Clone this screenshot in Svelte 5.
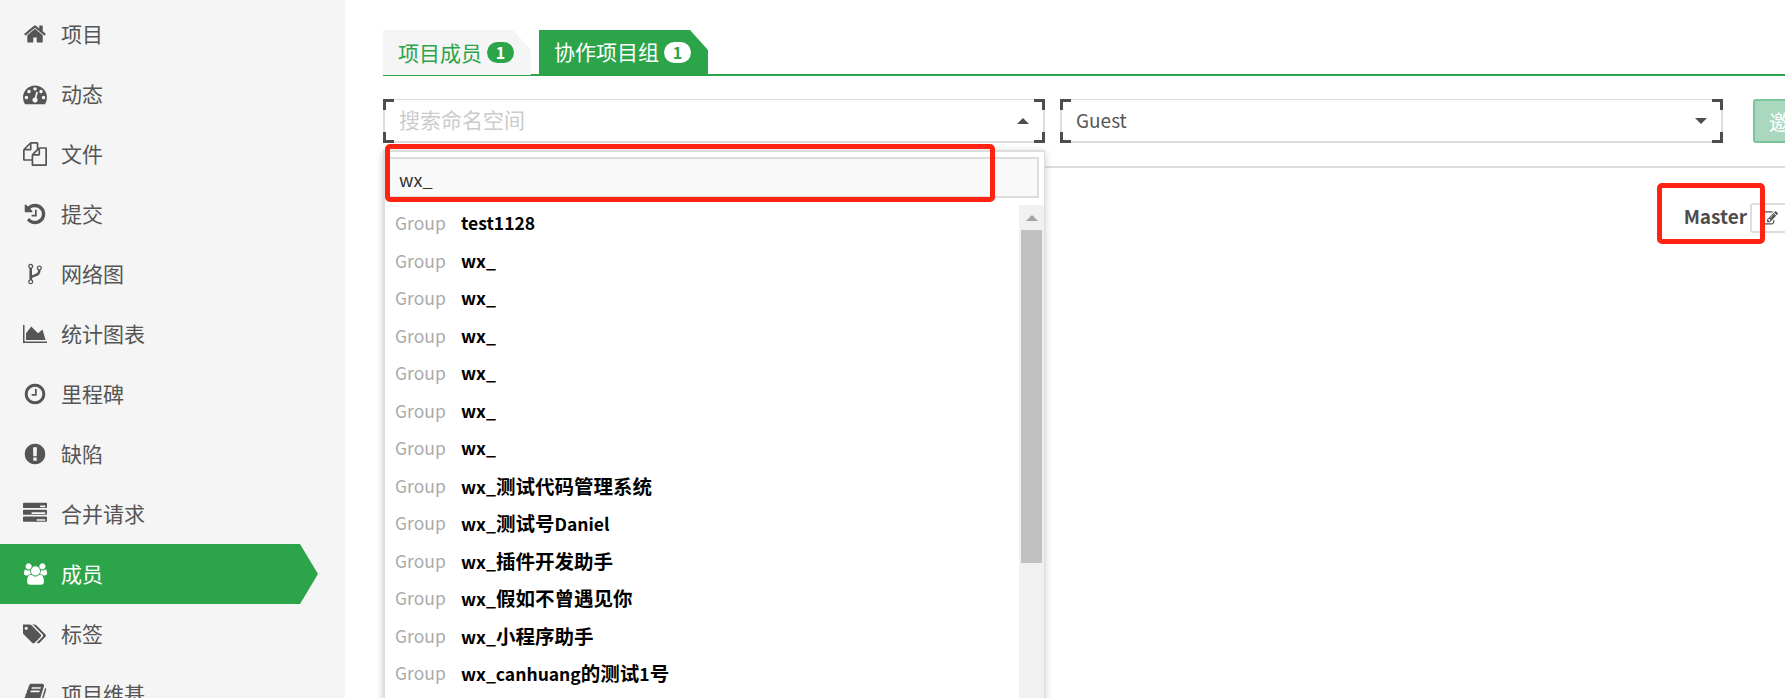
<script>
  const icons = {
    home: ['0 0 1792 1792', 'M1472 992v480q0 26-19 45t-45 19h-384v-384h-256v384h-384q-26 0-45-19t-19-45v-480q0-1 .5-3t.5-3l575-474 575 474q1 2 1 6zm223-69l-62 74q-8 9-21 11h-3q-13 0-21-7l-692-577-692 577q-12 8-24 7-13-2-21-11l-62-74q-8-10-7-23.5t11-21.5l719-599q32-26 76-26t76 26l244 204v-195q0-14 9-23t23-9h192q14 0 23 9t9 23v408l219 182q10 8 11 21.5t-7 23.5z'],
    dashboard: ['0 0 1792 1792', 'M384 1152q0-53-37.5-90.5t-90.5-37.5-90.5 37.5-37.5 90.5 37.5 90.5 90.5 37.5 90.5-37.5 37.5-90.5zm192-448q0-53-37.5-90.5t-90.5-37.5-90.5 37.5-37.5 90.5 37.5 90.5 90.5 37.5 90.5-37.5 37.5-90.5zm428 481l101-382q6-26-7.5-48.5t-38.5-29.5-48 6.5-30 39.5l-101 382q-60 5-107 43.5t-63 98.5q-20 77 20 146t117 89 146-20 89-117q16-60-6-117t-72-91zm660-33q0-53-37.5-90.5t-90.5-37.5-90.5 37.5-37.5 90.5 37.5 90.5 90.5 37.5 90.5-37.5 37.5-90.5zm-640-640q0-53-37.5-90.5t-90.5-37.5-90.5 37.5-37.5 90.5 37.5 90.5 90.5 37.5 90.5-37.5 37.5-90.5zm448 192q0-53-37.5-90.5t-90.5-37.5-90.5 37.5-37.5 90.5 37.5 90.5 90.5 37.5 90.5-37.5 37.5-90.5zm320 448q0 261-141 483-19 29-54 29h-1402q-35 0-54-29-141-221-141-483 0-182 71-348t191-286 286-191 348-71 348 71 286 191 191 286 71 348z'],
    files: ['0 0 1792 1792', 'M1696 384q40 0 68 28t28 68v1216q0 40-28 68t-68 28h-960q-40 0-68-28t-28-68v-288h-544q-40 0-68-28t-28-68v-672q0-40 20-88t48-76l408-408q28-28 76-48t88-20h416q40 0 68 28t28 68v328q68-40 128-40h416zm-544 213l-299 299h299v-299zm-640-384l-299 299h299v-299zm196 647l316-316v-416h-384v416q0 40-28 68t-68 28h-416v640h512v-256q0-40 20-88t48-76zm956 804v-1152h-384v416q0 40-28 68t-68 28h-416v640h896z'],
    history: ['0 0 1792 1792', 'M1664 896q0 156-61 298t-164 245-245 164-298 61q-172 0-327-72.5t-264-204.5q-7-10-6.5-22.5t8.5-20.5l137-138q10-9 25-9 16 2 23 12 73 95 179 147t225 52q104 0 198.5-40.5t163.5-109.5 109.5-163.5 40.5-198.5-40.5-198.5-109.5-163.5-163.5-109.5-198.5-40.5q-98 0-188 35.5t-160 101.5l137 138q31 30 14 69-17 40-59 40h-448q-26 0-45-19t-19-45v-448q0-42 40-59 39-17 69 14l130 129q107-101 244.5-156.5t284.5-55.5q156 0 298 61t245 164 164 245 61 298zm-640-288v448q0 14-9 23t-23 9h-320q-14 0-23-9t-9-23v-64q0-14 9-23t23-9h224v-352q0-14 9-23t23-9h64q14 0 23 9t9 23z'],
    fork: ['0 0 1792 1792', 'M672 1472q0-40-28-68t-68-28-68 28-28 68 28 68 68 28 68-28 28-68zm0-1152q0-40-28-68t-68-28-68 28-28 68 28 68 68 28 68-28 28-68zm640 128q0-40-28-68t-68-28-68 28-28 68 28 68 68 28 68-28 28-68zm96 0q0 52-26 96.5t-70 69.5q-2 287-226 414-67 38-203 81-128 40-169.5 71t-41.5 100v26q44 25 70 69.5t26 96.5q0 80-56 136t-136 56-136-56-56-136q0-52 26-96.5t70-69.5v-820q-44-25-70-69.5t-26-96.5q0-80 56-136t136-56 136 56 56 136q0 52-26 96.5t-70 69.5v497q54-26 154-57 55-17 87.5-29.5t70.5-31 59-39.5 40.5-51 28-69.5 8.5-91.5q-44-25-70-69.5t-26-96.5q0-80 56-136t136-56 136 56 56 136z'],
    chart: ['0 0 2048 1792', 'M2048 1536v128h-2048v-1536h128v1408h1920zm-384-1024l256 896h-1664v-576l448-576 576 576z'],
    clock: ['0 0 1792 1792', 'M1024 544v448q0 14-9 23t-23 9h-320q-14 0-23-9t-9-23v-64q0-14 9-23t23-9h224v-352q0-14 9-23t23-9h64q14 0 23 9t9 23zm416 352q0-148-73-273t-198-198-273-73-273 73-198 198-73 273 73 273 198 198 273 73 273-73 198-198 73-273zm224 0q0 209-103 385.5t-279.5 279.5-385.5 103-385.5-103-279.5-279.5-103-385.5 103-385.5 279.5-279.5 385.5-103 385.5 103 279.5 279.5 103 385.5z'],
    alert: ['0 0 1792 1792', 'M896 128q209 0 385.5 103t279.5 279.5 103 385.5-103 385.5-279.5 279.5-385.5 103-385.5-103-279.5-279.5-103-385.5 103-385.5 279.5-279.5 385.5-103zm128 1247v-190q0-14-9-23.5t-22-9.5h-192q-13 0-23 10t-10 23v190q0 13 10 23t23 10h192q13 0 22-9.5t9-23.5zm-2-344l18-621q0-12-10-18-10-8-24-8h-220q-14 0-24 8-10 6-10 18l17 621q0 10 10 17.5t24 7.5h185q14 0 23.5-7.5t10.5-17.5z'],
    tasks: ['0 0 1792 1792', 'M1024 1408h640v-128h-640v128zm-384-512h1024v-128h-1024v128zm640-512h384v-128h-384v128zm512 768v256q0 26-19 45t-45 19h-1664q-26 0-45-19t-19-45v-256q0-26 19-45t45-19h1664q26 0 45 19t19 45zm0-512v256q0 26-19 45t-45 19h-1664q-26 0-45-19t-19-45v-256q0-26 19-45t45-19h1664q26 0 45 19t19 45zm0-512v256q0 26-19 45t-45 19h-1664q-26 0-45-19t-19-45v-256q0-26 19-45t45-19h1664q26 0 45 19t19 45z'],
    users: ['0 0 1920 1792', 'M593 896q-162 5-265 128h-134q-82 0-138-40.5t-56-118.5q0-353 124-353 6 0 43.5 21t97.5 42.5 119 21.5q67 0 133-23-5 37-5 66 0 139 81 256zm1071 637q0 120-73 189.5t-194 69.5h-874q-121 0-194-69.5t-73-189.5q0-53 3.5-103.5t14-109 26.5-108.5 43-97.5 62-81 85.5-53.5 111.5-20q10 0 43 21.5t73 48 107 48 135 21.5 135-21.5 107-48 73-48 43-21.5q61 0 111.5 20t85.5 53.5 62 81 43 97.5 26.5 108.5 14 109 3.5 103.5zm-1024-1277q0 106-75 181t-181 75-181-75-75-181 75-181 181-75 181 75 75 181zm704 384q0 159-112.5 271.5t-271.5 112.5-271.5-112.5-112.5-271.5 112.5-271.5 271.5-112.5 271.5 112.5 112.5 271.5zm576 225q0 78-56 118.5t-138 40.5h-134q-103-123-265-128 81-117 81-256 0-29-5-66 66 23 133 23 59 0 119-21.5t97.5-42.5 43.5-21q124 0 124 353zm-128-609q0 106-75 181t-181 75-181-75-75-181 75-181 181-75 181 75 75 181z', 23],
    tags: ['0 0 1920 1792', 'M384 448q0-53-37.5-90.5t-90.5-37.5-90.5 37.5-37.5 90.5 37.5 90.5 90.5 37.5 90.5-37.5 37.5-90.5zm1067 576q0 53-37 90l-491 492q-39 37-91 37-53 0-90-37l-715-716q-38-37-64.5-101t-26.5-117v-416q0-52 38-90t90-38h416q53 0 117 26.5t102 64.5l715 714q37 39 37 91zm384 0q0 53-37 90l-491 492q-39 37-91 37-36 0-59-14t-53-45l470-470q37-37 37-90 0-52-37-91l-715-714q-38-38-102-64.5t-117-26.5h224q53 0 117 26.5t102 64.5l715 714q37 39 37 91z', 24],
    book: ['0 0 1792 1792', 'M1703 478q40 57 18 129l-275 906q-19 64-76.5 107.5t-122.5 43.5h-923q-77 0-148.5-53.5t-99.5-131.5q-24-67-2-127 0-4 3-27t4-37q1-8-3-21.5t-3-19.5q2-11 8-21t16.5-23.5 16.5-23.5q23-38 45-91.5t30-91.5q3-10 .5-30t-.5-28q3-11 17-28t17-23q21-36 42-92t25-90q1-9-2.5-32t.5-28q4-13 22-30.5t22-22.5q19-26 42.5-84.5t27.5-96.5q1-8-3-25.5t-2-26.5q2-8 9-18t18-23 17-21q8-12 16.5-30.5t15-35 16-36 19.5-32 26.5-23.5 36-11.5 47.5 5.5l-1 3q38-9 51-9h761q74 0 114 56t18 130l-274 906q-36 119-71.5 153.5t-128.5 34.5h-869q-27 0-38 15-11 16-1 43 24 70 144 70h923q29 0 56-15.5t35-41.5l300-987q7-22 5-57 38 15 59 43zm-1064 2q-4 13 2 22.5t20 9.5h608q13 0 25.5-9.5t16.5-22.5l21-64q4-13-2-22.5t-20-9.5h-608q-13 0-25.5 9.5t-16.5 22.5zm-83 256q-4 13 2 22.5t20 9.5h608q13 0 25.5-9.5t16.5-22.5l21-64q4-13-2-22.5t-20-9.5h-608q-13 0-25.5 9.5t-16.5 22.5z'],
  }
  const editIcon = 'M888 1184l116-116-152-152-116 116v56h96v96h56zm440-720q-16-16-33 1l-350 350q-17 17-1 33t33-1l350-350q17-17 1-33zm80 594v190q0 119-84.5 203.5t-203.5 84.5h-832q-119 0-203.5-84.5t-84.5-203.5v-832q0-119 84.5-203.5t203.5-84.5h832q63 0 117 25 15 7 18 23 3 17-9 29l-49 49q-14 14-32 8-23-6-45-6h-832q-66 0-113 47t-47 113v832q0 66 47 113t113 47h832q66 0 113-47t47-113v-126q0-13 9-22l64-64q15-15 35-7t20 29zm-96-738l288 288-672 672h-288v-288zm444 132l-92 92-288-288 92-92q28-28 68-28t68 28l152 152q28 28 28 68t-28 68z'

  const nav = [
    { label: '项目', icon: 'home' },
    { label: '动态', icon: 'dashboard' },
    { label: '文件', icon: 'files' },
    { label: '提交', icon: 'history' },
    { label: '网络图', icon: 'fork' },
    { label: '统计图表', icon: 'chart' },
    { label: '里程碑', icon: 'clock' },
    { label: '缺陷', icon: 'alert' },
    { label: '合并请求', icon: 'tasks' },
    { label: '成员', icon: 'users', active: true },
    { label: '标签', icon: 'tags' },
    { label: '项目维基', icon: 'book' },
  ]

  const groups = [
    'test1128', 'wx_', 'wx_', 'wx_', 'wx_', 'wx_', 'wx_',
    'wx_测试代码管理系统', 'wx_测试号Daniel', 'wx_插件开发助手',
    'wx_假如不曾遇见你', 'wx_小程序助手', 'wx_canhuang的测试1号',
  ]

  // odd parts are the Chinese runs, which sit a little larger than the latin
  const runs = (name) => name.split(/([^\x00-\x7f]+)/)
</script>

{#snippet corners()}
  <i class="corner tl"></i><i class="corner bl"></i><i class="corner tr"></i><i class="corner br"></i>
{/snippet}

<div class="page">
  <aside class="sidebar">
    {#each nav as item}
      <div class="nav-row" class:active={item.active}>
        <span class="nav-icon">
          <svg viewBox={icons[item.icon][0]} width={icons[item.icon][2] ?? 24} height="24" fill="currentColor">
            <path d={icons[item.icon][1]} />
          </svg>
        </span>
        <span class="nav-label">{item.label}</span>
      </div>
    {/each}
  </aside>

  <main class="main">
    <div class="tabs">
      <div class="tab">项目成员<span class="badge">1</span></div>
      <div class="tab current">协作项目组<span class="badge">1</span></div>
    </div>

    <div class="invite">
      <div class="select first">
        {@render corners()}
        <span class="placeholder">搜索命名空间</span>
        <span class="caret up"></span>

        <div class="dropdown">
          <div class="search">wx_</div>
          <div class="results">
            <ul class="list">
              {#each groups as name}
                <li>
                  <span class="kind">Group</span>
                  <b>{#each runs(name) as run, i}{#if i % 2}<span class="cjk">{run}</span>{:else}{run}{/if}{/each}</b>
                </li>
              {/each}
            </ul>
            <div class="scrollbar">
              <span class="scroll-up"></span>
              <span class="thumb"></span>
            </div>
          </div>
        </div>
        <div class="mark mark-search"></div>
      </div>

      <div class="select second">
        {@render corners()}
        <span class="value">Guest</span>
        <span class="caret down"></span>
      </div>

      <button class="invite-btn">邀请</button>
    </div>

    <div class="member">
      <div class="role">
        <strong>Master</strong>
        <div class="mark mark-role"></div>
      </div>
      <button class="edit" aria-label="edit">
        <svg viewBox="0 0 1792 1792" width="17" height="17" fill="#555"><path d={editIcon} /></svg>
      </button>
    </div>
  </main>
</div>

<style>
  :global(body) {
    margin: 0;
    background: #fff;
  }

  .page {
    display: flex;
    height: 698px;
    overflow: hidden;
    font-family: "Noto Sans CJK SC", "Noto Sans", sans-serif;
    font-size: 21px;
    color: #555;
  }

  .sidebar {
    width: 345px;
    flex-shrink: 0;
    background: #f5f5f5;
    padding-top: 4px;
    box-sizing: border-box;
  }

  .nav-row {
    height: 60px;
    display: flex;
    align-items: center;
    gap: 13px;
    padding-left: 22px;
    position: relative;
  }

  .nav-label {
    padding-bottom: 3px;
  }

  .nav-row.active {
    width: 300px;
    box-sizing: border-box;
    background: #2ca44a;
    color: #fff;
  }

  .nav-row.active::after {
    content: '';
    position: absolute;
    left: 100%;
    top: 0;
    border-left: 18px solid #2ca44a;
    border-top: 30px solid transparent;
    border-bottom: 30px solid transparent;
  }

  .nav-icon {
    width: 26px;
    display: flex;
    justify-content: center;
  }

  .main {
    flex: 1;
    min-width: 0;
    overflow: hidden;
    padding-top: 30px;
    height: 698px;
    box-sizing: border-box;
  }

  .tabs {
    display: flex;
    gap: 8px;
    margin-left: 38px;
    height: 46px;
    border-bottom: 2px solid #2ca44a;
    box-sizing: border-box;
    overflow: visible;
  }

  .tab {
    height: 45px;
    box-sizing: border-box;
    padding: 0 17px 2px 15px;
    background: #f5f5f5;
    color: #2ca44a;
    display: flex;
    align-items: center;
    gap: 5px;
    line-height: 40px;
    clip-path: polygon(0 0, calc(100% - 18px) 0, 100% 20px, 100% 100%, 0 100%);
  }

  .tab.current {
    height: 44px;
    background: #2ca44a;
    color: #fff;
  }

  .badge {
    width: 27px;
    height: 21px;
    margin-top: 2px;
    border-radius: 11px;
    background: #2ca44a;
    color: #fff;
    font-size: 16px;
    font-weight: 700;
    line-height: 21px;
    text-align: center;
  }

  .current .badge {
    background: #fff;
    color: #2ca44a;
  }

  .invite {
    display: flex;
    margin-left: 38px;
    margin-top: 23px;
    height: 67px;
    align-items: flex-start;
    border-bottom: 2px solid #ddd;
  }

  .select {
    position: relative;
    flex-shrink: 0;
    height: 44px;
    box-sizing: border-box;
    border: 2px solid #ddd;
    border-top-width: 1px;
    padding-left: 14px;
    line-height: 39px;
  }

  .select.first {
    width: 662px;
    z-index: 2;
  }

  .select.second {
    width: 663px;
    margin-left: 15px;
  }

  .placeholder {
    color: #ccc;
    font-size: 21px;
  }

  .value {
    color: #555;
    font-size: 19px;
  }

  .corner {
    position: absolute;
    width: 8px;
    height: 8px;
    border: 0 solid #4d4d4d;
  }

  .tl { left: -2px; top: -1px; border-width: 3px 0 0 3px; }
  .bl { left: -2px; bottom: -2px; border-width: 0 0 3px 3px; }
  .tr { right: -2px; top: -1px; border-width: 3px 3px 0 0; }
  .br { right: -2px; bottom: -2px; border-width: 0 3px 3px 0; }

  .caret {
    position: absolute;
    right: 14px;
    top: 18px;
    border-left: 6px solid transparent;
    border-right: 6px solid transparent;
  }

  .caret.up { border-bottom: 6px solid #4d4d4d; }
  .caret.down { border-top: 6px solid #4d4d4d; }

  .invite-btn {
    width: 80px;
    height: 44px;
    flex-shrink: 0;
    margin-left: 30px;
    padding: 0 0 0 14px;
    border: 2px solid #7cc49a;
    border-radius: 3px;
    background: #a9d8bf;
    color: #fff;
    font: inherit;
    text-align: left;
    white-space: nowrap;
  }

  .dropdown {
    position: absolute;
    left: -2px;
    top: 50px;
    width: 662px;
    height: 560px;
    background: #fff;
    border: 1px solid #ddd;
    border-left-width: 2px;
    border-top-width: 2px;
    box-sizing: border-box;
    box-shadow: 0 2px 8px rgba(0, 0, 0, 0.2);
    padding: 5px 5px 0 3px;
    line-height: normal;
  }

  .search {
    height: 41px;
    box-sizing: border-box;
    border: 2px solid #ddd;
    background: #f9f9f9;
    color: #333;
    font-size: 18px;
    line-height: 41px;
    padding-left: 9px;
  }

  .results {
    display: flex;
    margin: 7px -5px 0 -3px;
  }

  .list {
    flex: 1;
    margin: 0;
    padding: 0;
    list-style: none;
  }

  .list li {
    height: 37.5px;
    line-height: 35px;
    padding-left: 10px;
    display: flex;
    font-size: 17.5px;
    color: #000;
  }

  .cjk {
    font-size: 19.5px;
  }

  .kind {
    width: 66px;
    color: #aaa;
  }

  .list b {
    font-weight: 700;
  }

  .scrollbar {
    width: 25px;
    background: #f1f1f1;
    height: 520px;
    padding: 0 2px 0 2px;
    box-sizing: border-box;
    display: flex;
    flex-direction: column;
    align-items: stretch;
  }

  .scroll-up {
    height: 25px;
    box-sizing: border-box;
    position: relative;
  }

  .scroll-up::after {
    content: '';
    position: absolute;
    left: 5px;
    top: 10px;
    border-left: 6px solid transparent;
    border-right: 6px solid transparent;
    border-bottom: 6px solid #a3a3a3;
  }

  .thumb {
    height: 333px;
    background: #c1c1c1;
  }

  .mark {
    position: absolute;
    border: 5px solid #ff2314;
    border-radius: 5px;
    box-sizing: border-box;
    pointer-events: none;
  }

  .mark-search {
    left: 0;
    top: 44px;
    width: 610px;
    height: 58px;
  }

  .member {
    display: flex;
    justify-content: flex-end;
    align-items: center;
    height: 30px;
    margin-top: 35px;
    margin-right: -3px;
  }

  .role {
    position: relative;
    margin: 0 3px 5px 0;
    color: #4d4d4d;
    font-size: 19px;
  }

  .mark-role {
    right: -18px;
    top: -19px;
    width: 108px;
    height: 61px;
  }

  .edit {
    width: 38px;
    height: 30px;
    padding: 0 0 0 9px;
    background: #fff;
    border: 2px solid #ddd;
    border-radius: 3px;
    display: flex;
    align-items: center;
  }
</style>
